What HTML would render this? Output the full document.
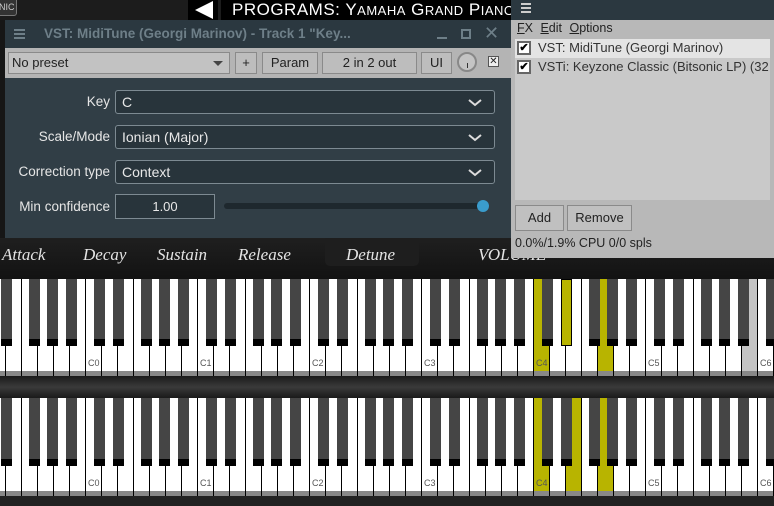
<!DOCTYPE html>
<html><head><meta charset="utf-8"><style>
*{margin:0;padding:0;box-sizing:border-box}
body{width:774px;height:506px;overflow:hidden;background:#161616;position:relative;font-family:"Liberation Sans",sans-serif}
.a{position:absolute}
.lbl{font-family:"Liberation Serif",serif;font-style:italic;color:#e4e4e4;font-size:17px;top:245px}
.btn{position:absolute;background:#bdbdbd;border:1px solid #8a8a8a;font-size:13px;color:#222;text-align:center;line-height:20px}
.sel{position:absolute;left:115px;width:380px;height:24px;border:1px solid #7d8a92;border-radius:3px;background:#28343b;color:#e8e8e8;font-size:14px;line-height:22px;padding-left:6px}
.sel svg{position:absolute;right:12px;top:8px}
.rl{position:absolute;width:110px;text-align:right;color:#e6e6e6;font-size:13.5px}
.wk{position:absolute;background:#fff;border-left:1px solid #000;width:16px}
.bk{position:absolute;width:11px;background:#454545;border-bottom:7px solid #000}
.nl{position:absolute;font-size:9px;color:#555}
</style></head><body>
<div class="a" style="left:0;top:0;width:774px;height:20px;background:#1c1c1c"></div>
<div class="a" style="left:-4px;top:-4px;width:21px;height:20px;border:1px solid #777;border-radius:3px;background:#333;color:#ccc;font-size:9px;line-height:20px;padding-left:2px">NIC</div>
<div class="a" style="left:188px;top:0;width:30px;height:20px;background:#000"></div>
<div class="a" style="left:195px;top:1px;width:0;height:0;border-top:9px solid transparent;border-bottom:9px solid transparent;border-right:18px solid #fff"></div>
<div class="a" style="left:221px;top:0;width:300px;height:20px;background:#000;color:#fff;font-size:17px;line-height:20px;padding-left:11px;letter-spacing:0.5px;white-space:nowrap">PROGRAMS: Y<span style="font-size:13px">AMAHA</span> G<span style="font-size:13px">RAND</span> P<span style="font-size:13px">IANO</span></div>
<div class="a" style="left:0;top:238px;width:774px;height:42px;background:linear-gradient(#1f1f1f,#121212)"></div>
<div class="a" style="left:325px;top:238px;width:94px;height:28px;background:#1e1e1e;border-radius:0 0 5px 5px"></div>
<div class="a lbl" style="left:2px">Attack</div>
<div class="a lbl" style="left:83px">Decay</div>
<div class="a lbl" style="left:157px">Sustain</div>
<div class="a lbl" style="left:238px">Release</div>
<div class="a lbl" style="left:346px">Detune</div>
<div class="a lbl" style="left:478px">VOLUME</div>
<div class="a" style="left:0;top:376px;width:774px;height:22px;background:linear-gradient(#1a1a1a,#3a3a3a 50%,#1a1a1a)"></div>
<div class="a" style="left:0;top:496px;width:774px;height:10px;background:#222"></div>
<div id="kb"></div>
<div class="a" style="left:5px;top:20px;width:506px;height:218px;background:#313e46">
 <div class="a" style="left:0;top:0;width:506px;height:28px;background:#2b3840"></div>
 <div class="a" style="left:9px;top:9px;width:11px;height:2px;background:#6e7f88;box-shadow:0 4px #6e7f88,0 8px #6e7f88"></div>
 <div class="a" style="left:39px;top:6px;color:#6e7f88;font-weight:bold;font-size:13.5px;white-space:nowrap">VST: MidiTune (Georgi Marinov) - Track 1 "Key...</div>
 <div class="a" style="left:432px;top:17px;width:10px;height:2px;background:#6e7f88"></div>
 <div class="a" style="left:456px;top:9px;width:10px;height:10px;border:2px solid #6e7f88"></div>
 <div class="a" style="left:479px;top:3px;color:#6e7f88;font-size:18px">✕</div>
 <div class="a" style="left:0;top:28px;width:506px;height:30px;background:#b4b4b4"></div>
 <div class="btn" style="left:3px;top:32px;width:222px;height:22px;text-align:left;padding-left:3px;font-size:13px;background:#c2c2c2">No preset<span style="position:absolute;right:6px;top:8px;border-left:5px solid transparent;border-right:5px solid transparent;border-top:5px solid #444"></span></div>
 <div class="btn" style="left:230px;top:32px;width:22px;height:22px">+</div>
 <div class="btn" style="left:257px;top:32px;width:56px;height:22px">Param</div>
 <div class="btn" style="left:317px;top:32px;width:95px;height:22px">2 in 2 out</div>
 <div class="btn" style="left:416px;top:32px;width:31px;height:22px">UI</div>
 <div class="a" style="left:452px;top:32px;width:20px;height:20px;border-radius:50%;border:2px solid #888;background:#c4c4c4"></div>
 <div class="a" style="left:462px;top:43px;width:1px;height:5px;background:#333"></div>
 <div class="a" style="left:483px;top:36px;width:11px;height:11px;border:1px solid #555;background:#eee;font-size:10px;line-height:9px;text-align:center;color:#222">✕</div>
</div>
<div class="rl" style="left:0;top:94px">Key</div>
<div class="rl" style="left:0;top:129px">Scale/Mode</div>
<div class="rl" style="left:0;top:164px">Correction type</div>
<div class="rl" style="left:0;top:199px">Min confidence</div>
<div class="sel" style="top:90px">C<svg width="14" height="8"><path d="M1 1L7 6L13 1" stroke="#ddd" stroke-width="2" fill="none"/></svg></div>
<div class="sel" style="top:125px">Ionian (Major)<svg width="14" height="8"><path d="M1 1L7 6L13 1" stroke="#ddd" stroke-width="2" fill="none"/></svg></div>
<div class="sel" style="top:160px">Context<svg width="14" height="8"><path d="M1 1L7 6L13 1" stroke="#ddd" stroke-width="2" fill="none"/></svg></div>
<div class="a" style="left:115px;top:194px;width:100px;height:25px;border:1px solid #7d8a92;background:#28343b;color:#e8e8e8;font-size:13px;line-height:23px;text-align:center">1.00</div>
<div class="a" style="left:224px;top:203px;width:262px;height:6px;border-radius:3px;background:#1e282e"></div>
<div class="a" style="left:477px;top:200px;width:12px;height:12px;border-radius:50%;background:#3a9ccc"></div>
<div class="a" style="left:511px;top:0;width:263px;height:258px;background:#b8b8b8">
 <div class="a" style="left:0;top:0;width:263px;height:20px;background:#2b3840"></div>
 <div class="a" style="left:10px;top:3px;width:10px;height:2px;background:#ccc;box-shadow:0 4px #ccc,0 8px #ccc"></div>
 <div class="a" style="left:6px;top:21px;font-size:12.5px;color:#222;word-spacing:4px"><u>F</u>X <u>E</u>dit <u>O</u>ptions</div>
 <div class="a" style="left:4px;top:39px;width:255px;height:161px;background:#c9c9c9"></div>
 <div class="a" style="left:4px;top:39px;width:255px;height:19px;background:#e4e4e4"></div>
 <div class="a" style="left:6px;top:41px;width:14px;height:14px;border:2px solid #666;background:#fff;font-size:11px;line-height:11px;text-align:center;font-weight:bold">✔</div>
 <div class="a" style="left:6px;top:60px;width:14px;height:14px;border:2px solid #666;background:#fff;font-size:11px;line-height:11px;text-align:center;font-weight:bold">✔</div>
 <div class="a" style="left:27px;top:40px;font-size:13px;color:#333;white-space:nowrap">VST: MidiTune (Georgi Marinov)</div>
 <div class="a" style="left:27px;top:59px;font-size:13px;color:#333;white-space:nowrap;width:232px;overflow:hidden">VSTi: Keyzone Classic (Bitsonic LP) (32</div>
 <div class="btn" style="left:4px;top:205px;width:49px;height:26px;line-height:24px;background:#c0c0c0">Add</div>
 <div class="btn" style="left:56px;top:205px;width:65px;height:26px;line-height:24px;background:#c0c0c0">Remove</div>
 <div class="a" style="left:4px;top:236px;font-size:12.5px;color:#222">0.0%/1.9% CPU 0/0 spls</div>
</div>
<script>
var kb=document.getElementById('kb'),h='';
function row(top,wh,bh,yel,ylBlack,gray){
 for(var i=-6;i<45;i++){var x=85+i*16;var c=((i%7)+7)%7;var o=Math.floor(i/7);
  var bg='#fff';if(yel.indexOf(i)>=0)bg='#b8b400';if(gray.indexOf(i)>=0)bg='#c4c4c4';
  h+='<div class="wk" style="left:'+x+'px;top:'+top+'px;height:'+wh+'px;background:'+bg+'"></div>';
  h+='<div class="a" style="left:'+x+'px;top:'+(top+wh)+'px;width:16px;height:5px;background:#888;border-left:1px solid #000"></div>';
  if(c==0&&o>=0&&o<=6)h+='<div class="nl" style="left:'+(x+3)+'px;top:'+(top+wh-13)+'px">C'+o+'</div>';}
 var offs=[9,28,56,74,93];
 for(var o=-1;o<7;o++)for(var j=0;j<5;j++){var x=85+o*112+offs[j];var id=o*5+j;
  var st=ylBlack.indexOf(id)>=0?'background:#b8b400;border:1px solid #000;':'';
  h+='<div class="bk" style="left:'+x+'px;top:'+top+'px;height:'+bh+'px;'+st+'"></div>';}
}
row(279,92,67,[28,32],[21],[41]);
row(398,93,68,[28,30,32],[],[]);
kb.innerHTML=h;
</script>
</body></html>
